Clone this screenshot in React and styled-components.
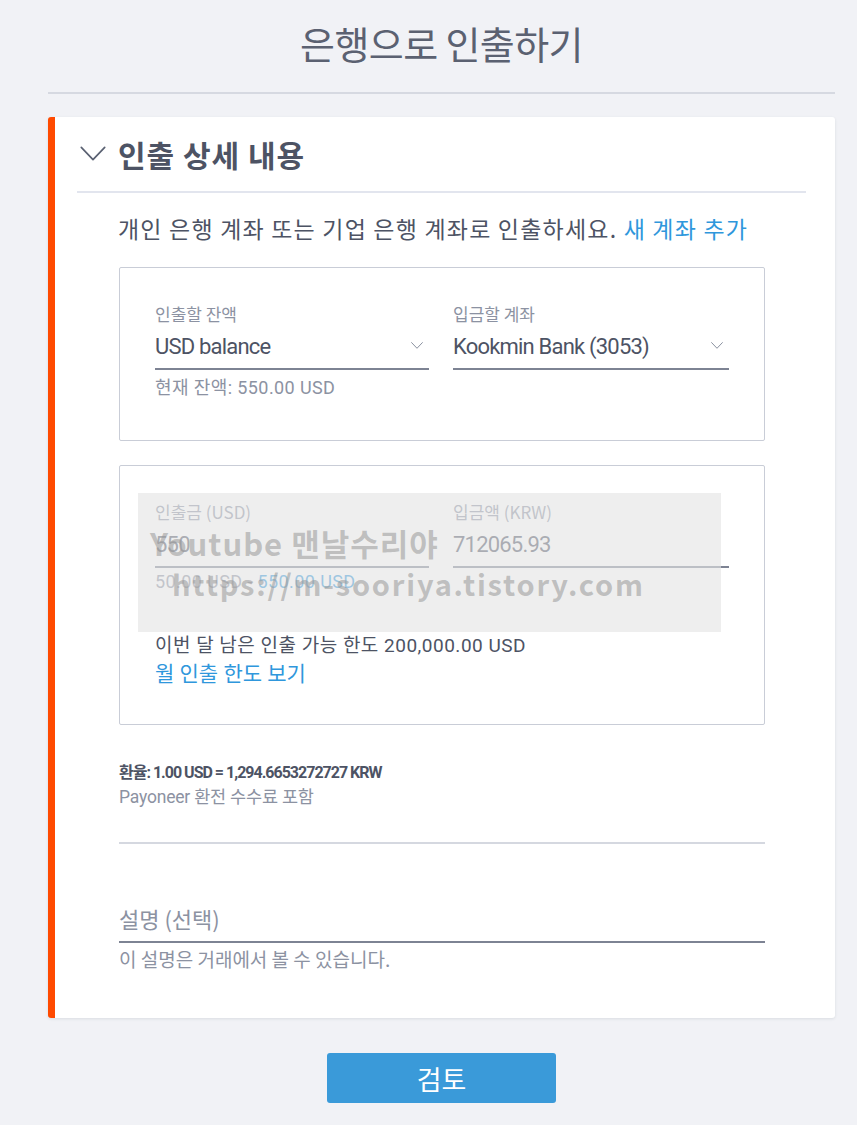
import React from 'react';
import styled, { createGlobalStyle } from 'styled-components';

const GlobalStyle = createGlobalStyle`
  html, body {
    margin: 0;
    padding: 0;
    background: #f1f2f6;
  }
  body {
    font-family: Roboto, "Noto Sans CJK KR", sans-serif;
    color: #4b5263;
  }
  * { box-sizing: border-box; }
`;

const Chevron = ({ size = 12, stroke = '#7d8494', width = 1.5 }) => (
  <svg width={size} height={size * 0.6} viewBox="0 0 20 12" fill="none">
    <path d="M1 1 L10 10.5 L19 1" stroke={stroke} strokeWidth={width} strokeLinecap="round" strokeLinejoin="round" />
  </svg>
);

const App = () => {
  return (
    <>
      <GlobalStyle />
      <Page>
        <PageTitle>은행으로 인출하기</PageTitle>
        <TitleRule />

        <Card>
          <CardHeader>
            <Chevron size={26} stroke="#5a6172" width={1.3} />
            <CardTitle>인출 상세 내용</CardTitle>
          </CardHeader>

          <CardBody>
            <Intro>
              개인 은행 계좌 또는 기업 은행 계좌로 인출하세요. <Link>새 계좌 추가</Link>
            </Intro>

            <Box $height={174}>
              <FieldRow>
                <Field>
                  <FieldLabel>인출할 잔액</FieldLabel>
                  <FieldInput>
                    <span>USD balance</span>
                    <Chevron />
                  </FieldInput>
                  <Helper>현재 잔액: 550.00 USD</Helper>
                </Field>
                <Field>
                  <FieldLabel>입금할 계좌</FieldLabel>
                  <FieldInput>
                    <span>Kookmin Bank (3053)</span>
                    <Chevron />
                  </FieldInput>
                </Field>
              </FieldRow>
            </Box>

            <Box $height={260}>
              <FieldRow>
                <Field>
                  <FieldLabel>인출금 (USD)</FieldLabel>
                  <FieldInput>
                    <span>550</span>
                  </FieldInput>
                  <Helper>
                    50.00 USD - <Link>550.00 USD</Link>
                  </Helper>
                </Field>
                <Field>
                  <FieldLabel>입금액 (KRW)</FieldLabel>
                  <FieldInput>
                    <span>712065.93</span>
                  </FieldInput>
                </Field>
              </FieldRow>
              <Limit>이번 달 남은 인출 가능 한도 200,000.00 USD</Limit>
              <LimitLink>월 인출 한도 보기</LimitLink>

              <Watermark>
                <WatermarkLine>Youtube 맨날수리야</WatermarkLine>
                <WatermarkLine $small>https://m-sooriya.tistory.com</WatermarkLine>
              </Watermark>
            </Box>

            <Rate>
              <RateMain>환율: 1.00 USD = 1,294.6653272727 KRW</RateMain>
              <RateNote>Payoneer 환전 수수료 포함</RateNote>
            </Rate>

            <SectionRule />

            <Memo>
              <MemoInput>설명 (선택)</MemoInput>
              <MemoHelper>이 설명은 거래에서 볼 수 있습니다.</MemoHelper>
            </Memo>
          </CardBody>
        </Card>

        <Actions>
          <PrimaryButton>검토</PrimaryButton>
        </Actions>
      </Page>
    </>
  );
};

const Page = styled.div`
  width: 857px;
  height: 1125px;
  padding: 0 22px 0 48px;
  display: flex;
  flex-direction: column;
`;

const PageTitle = styled.h1`
  margin: 0;
  padding-top: 15px;
  height: 92px;
  text-align: center;
  font-family: "Noto Sans CJK KR", sans-serif;
  font-weight: 400;
  font-size: 38px;
  letter-spacing: -0.6px;
  color: #5b6171;
`;

const TitleRule = styled.div`
  height: 2px;
  background: #d6d9e1;
  margin-bottom: 23px;
`;

const Card = styled.section`
  background: #ffffff;
  border-left: 7px solid #ff4a00;
  border-radius: 3px;
  box-shadow: 0 1px 3px rgba(60, 70, 90, 0.12);
  height: 901px;
  padding: 0 29px 0 22px;
`;

const CardHeader = styled.div`
  display: flex;
  align-items: center;
  gap: 12px;
  height: 76px;
  padding-left: 3px;
  border-bottom: 2px solid #e2e5ee;
`;

const CardTitle = styled.h2`
  margin: 0;
  font-family: "Noto Sans CJK KR", sans-serif;
  font-weight: 700;
  font-size: 30px;
  letter-spacing: 1px;
  color: #4d5364;
`;

const CardBody = styled.div`
  padding: 18px 41px 0 42px;
  display: flex;
  flex-direction: column;
`;

const Intro = styled.p`
  margin: 0 0 22px -1px;
  font-family: "Noto Sans CJK KR", sans-serif;
  font-size: 23px;
  letter-spacing: 1.2px;
  line-height: 34px;
  color: #4d5364;
`;

const Link = styled.span`
  color: #2f97dc;
`;

const Box = styled.div`
  position: relative;
  height: ${p => p.$height}px;
  border: 1.5px solid #c9cdd7;
  border-radius: 2px;
  padding: 35px 35px 0 35px;
  margin-bottom: 24px;
`;

const FieldRow = styled.div`
  display: grid;
  grid-template-columns: 274px 276px;
  column-gap: 24px;
`;

const Field = styled.div`
  display: flex;
  flex-direction: column;
`;

const FieldLabel = styled.div`
  font-size: 17px;
  line-height: 22px;
  color: #8c92a2;
  font-family: "Noto Sans CJK KR", sans-serif;
  letter-spacing: 0;
`;

const FieldInput = styled.div`
  display: flex;
  justify-content: space-between;
  align-items: center;
  height: 45px;
  padding-bottom: 1px;
  border-bottom: 2px solid #7d8393;
  font-size: 22px;
  letter-spacing: -0.8px;
  color: #4d5364;
  padding-right: 6px;

  span { white-space: nowrap; }
`;

const Helper = styled.div`
  margin-top: 3px;
  font-size: 18px;
  letter-spacing: 0.4px;
  color: #8c92a2;
`;

const Limit = styled.div`
  margin-top: 38px;
  font-size: 19px;
  letter-spacing: 0.5px;
  color: #4d5364;
`;

const LimitLink = styled.div`
  margin-top: 0;
  font-size: 21px;
  letter-spacing: 0;
  color: #2f97dc;
`;

const Watermark = styled.div`
  position: absolute;
  left: 18px;
  top: 27px;
  width: 583px;
  height: 139px;
  background: rgba(228, 228, 228, 0.62);
  display: flex;
  flex-direction: column;
  padding: 30px 0 0 12px;
  pointer-events: none;
`;

const WatermarkLine = styled.div`
  font-family: "Noto Sans CJK KR", sans-serif;
  font-weight: 700;
  font-size: ${p => (p.$small ? '29px' : '31px')};
  line-height: 40px;
  letter-spacing: ${p => (p.$small ? '1.8px' : '1px')};
  color: rgba(150, 150, 150, 0.55);
  padding-left: ${p => (p.$small ? '22px' : '0')};
  white-space: nowrap;
`;

const Rate = styled.div`
  margin-top: 10px;
  display: flex;
  flex-direction: column;
`;

const RateMain = styled.div`
  font-size: 16px;
  font-weight: 700;
  letter-spacing: -1px;
  color: #4d5364;
`;

const RateNote = styled.div`
  font-size: 17.5px;
  letter-spacing: -0.2px;
  color: #8c92a2;
`;

const SectionRule = styled.div`
  height: 2px;
  background: #d5d8e0;
  margin-top: 34px;
`;

const Memo = styled.div`
  margin-top: 58px;
  display: flex;
  flex-direction: column;
`;

const MemoInput = styled.div`
  height: 41px;
  border-bottom: 2px solid #7d8393;
  font-family: "Noto Sans CJK KR", sans-serif;
  font-size: 22px;
  letter-spacing: 0;
  color: #8c92a2;
`;

const MemoHelper = styled.div`
  margin-top: 2px;
  font-family: "Noto Sans CJK KR", sans-serif;
  font-size: 19px;
  letter-spacing: 0;
  color: #8c92a2;
`;

const Actions = styled.div`
  display: flex;
  justify-content: center;
  padding-top: 35px;
`;

const PrimaryButton = styled.button`
  width: 229px;
  height: 50px;
  border: none;
  border-radius: 3px;
  background: #3a9ad9;
  color: #ffffff;
  font-family: "Noto Sans CJK KR", sans-serif;
  font-size: 27px;
  cursor: pointer;
`;

export default App;
